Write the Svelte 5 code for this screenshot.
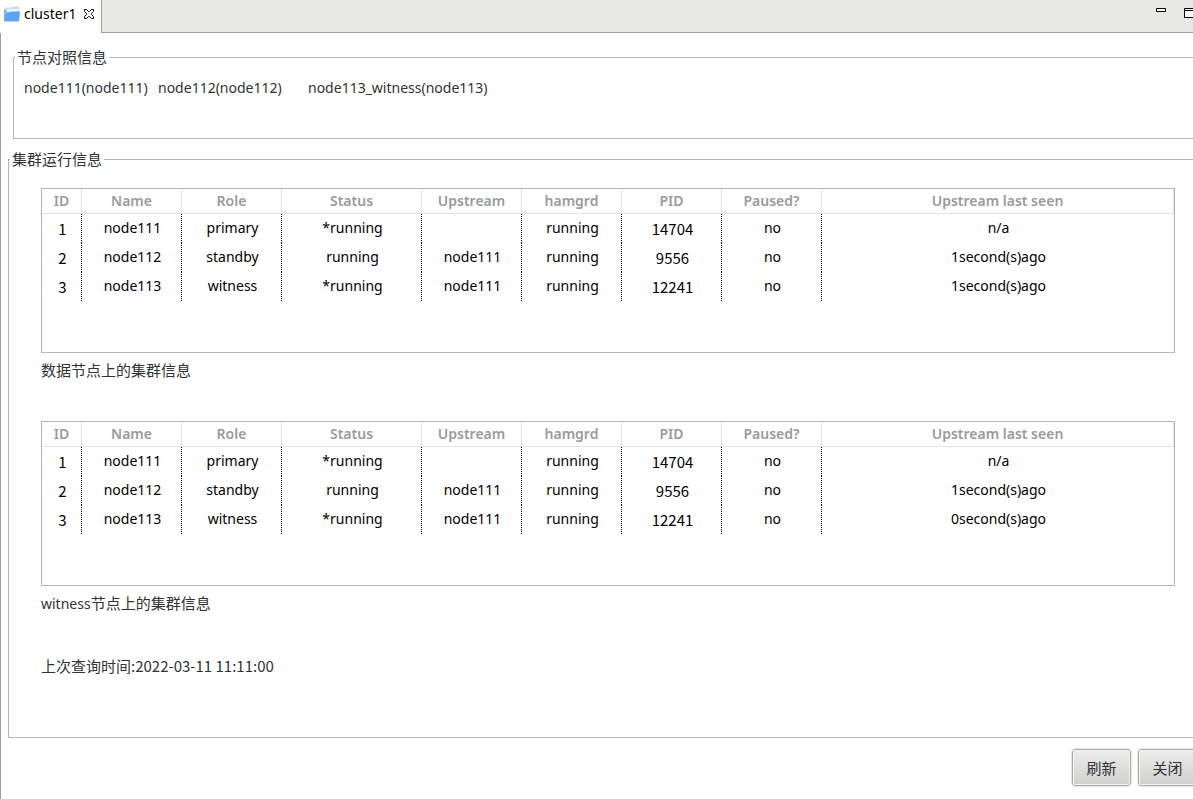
<script>
  const nodes = ['node111(node111)', 'node112(node112)', 'node113_witness(node113)'];
  const columns = ['ID', 'Name', 'Role', 'Status', 'Upstream', 'hamgrd', 'PID', 'Paused?', 'Upstream last seen'];

  const dataRows = [
    ['1', 'node111', 'primary', '*running', '', 'running', '14704', 'no', 'n/a'],
    ['2', 'node112', 'standby', 'running', 'node111', 'running', '9556', 'no', '1second(s)ago'],
    ['3', 'node113', 'witness', '*running', 'node111', 'running', '12241', 'no', '1second(s)ago']
  ];
  const witnessRows = [
    ['1', 'node111', 'primary', '*running', '', 'running', '14704', 'no', 'n/a'],
    ['2', 'node112', 'standby', 'running', 'node111', 'running', '9556', 'no', '1second(s)ago'],
    ['3', 'node113', 'witness', '*running', 'node111', 'running', '12241', 'no', '0second(s)ago']
  ];
  const sections = [
    { host: '', note: '数据节点上的集群信息', rows: dataRows },
    { host: 'witness', note: '节点上的集群信息', rows: witnessRows }
  ];
</script>

<div class="view">
  <header class="tabbar">
    <div class="tab">
      <svg class="folder" width="16" height="16" viewBox="0 0 16 16" aria-hidden="true">
        <path d="M1 1.5h6l1-1h7V14H1z" fill="#c5dcf9" />
        <path d="M3.5 3h11v4h-11z" fill="#eef5fe" />
        <path d="M0 3.5h2V15H0z" fill="#7db0f5" />
        <path d="M3.6 6.500L8 5.500H16L15 15.500H0.600L2 6.500z" fill="#5da2fb" />
      </svg>
      <span>cluster1</span>
      <button class="icon close" aria-label="close">
        <svg width="10" height="10" viewBox="0 0 10 10">
          <path d="M.5.5h2l2 2h1l2-2h2v2l-2 2v1l2 2v2h-2l-2-2h-1l-2 2h-2v-2l2-2v-1l-2-2z" fill="#fff" stroke="#000" />
        </svg>
      </button>
    </div>
    <div class="window-tools">
      <button class="icon" aria-label="minimize">
        <svg width="10" height="10" viewBox="0 0 10 10"><path d="M.5.5h9v3h-9z" fill="#fff" stroke="#000" /></svg>
      </button>
      <button class="icon" aria-label="maximize">
        <svg width="10" height="10" viewBox="0 0 10 10"><path d="M.5.5h9v9h-9zM0 2.500h10" fill="#fff" stroke="#000" /></svg>
      </button>
    </div>
  </header>

  <main>
    <fieldset class="nodes">
      <legend>节点对照信息</legend>
      <div class="node-list">
        {#each nodes as node}<span>{node}</span>{/each}
      </div>
    </fieldset>

    <fieldset class="cluster">
      <legend>集群运行信息</legend>
      <div class="cluster-body">
        {#each sections as section}
          <div class="grid-box">
            <table aria-label={section.host + section.note}>
              <colgroup>
                <col class="narrow" /><col /><col /><col class="wide" /><col /><col /><col /><col /><col class="rest" />
              </colgroup>
              <thead>
                <tr>{#each columns as column}<th scope="col">{column}</th>{/each}</tr>
              </thead>
              <tbody>
                {#each section.rows as row}
                  <tr>
                    {#each row as cell, i}<td class:number={i === 0 || i === 6}>{cell}</td>{/each}
                  </tr>
                {/each}
              </tbody>
            </table>
          </div>
          <p class="note"><span class="host">{section.host}</span>{section.note}</p>
        {/each}
        <p class="time">上次查询时间:2022-03-11 11:11:00</p>
      </div>
    </fieldset>

    <footer>
      <button class="push">刷新</button>
      <button class="push">关闭</button>
    </footer>
  </main>
</div>

<style>
  :global(body) {
    margin: 0;
    background: #fff;
  }
  .view {
    display: flex;
    flex-direction: column;
    min-height: 100vh;
    overflow: hidden;
    font: 14px/20px "Noto Sans", "Noto Sans CJK SC", sans-serif;
    color: #2e3436;
  }
  .tabbar {
    display: flex;
    justify-content: space-between;
    height: 33px;
    background: linear-gradient(#a0a19c, #a0a19c) bottom / 100% 1px no-repeat #e8e8e6;
  }
  .tab {
    display: flex;
    align-items: center;
    box-sizing: border-box;
    height: 33px;
    padding: 0 7px 5px 4px;
    border-right: 1px solid #a0a19c;
    background: #fff;
    color: #000;
  }
  .folder {
    margin-right: 4px;
  }
  .icon {
    display: block;
    padding: 0;
    border: 0;
    background: none;
    line-height: 0;
  }
  .close {
    margin-left: 8px;
  }
  .window-tools {
    display: flex;
    gap: 18px;
    align-items: flex-start;
    padding-top: 8px;
    margin-right: -1px;
  }
  main {
    flex: 1;
    border-left: 1px solid #a0a19c;
    padding: 15px 0 12px 7px;
  }
  fieldset {
    box-sizing: border-box;
    min-width: 0;
    margin: 0;
    border: 1px solid #b4b6b4;
    border-right: 0;
    padding: 0 0 0 1px;
  }
  legend {
    padding: 0 2px;
    font-size: 15px;
    line-height: 18px;
  }
  .nodes {
    margin-left: 5px;
    min-height: 91px;
  }
  .node-list {
    display: grid;
    grid-template-columns: 134px 150px auto;
    padding: 12px 9px 0;
  }
  .cluster {
    margin-top: 11px;
    min-height: 588px;
  }
  .cluster-body {
    padding: 20px 18px 0 31px;
  }
  .grid-box {
    box-sizing: border-box;
    min-height: 165px;
    border: 1px solid #b4b6b4;
  }
  table {
    width: 100%;
    table-layout: fixed;
    border-collapse: separate;
    border-spacing: 0;
    color: #000;
  }
  col {
    width: 100px;
  }
  .narrow {
    width: 40px;
  }
  .wide {
    width: 140px;
  }
  .rest {
    width: auto;
  }
  th,
  td {
    padding: 0;
    text-align: center;
  }
  th {
    height: 24px;
    border-right: 1px solid #e3e3e2;
    border-bottom: 1px solid #e3e3e2;
    font-weight: 600;
    color: #999b9a;
  }
  td {
    height: 27px;
    padding: 0 0 2px 1px;
    background: repeating-linear-gradient(#000 0 1px, transparent 1px 2px) right / 1px 100% no-repeat;
  }
  td:last-child {
    background: none;
  }
  .number {
    height: 29px;
    padding-bottom: 0;
    font-family: "Noto Sans CJK SC", sans-serif;
    font-size: 15px;
  }
  .note,
  .time {
    margin: 0;
    font-family: "Noto Sans CJK SC", sans-serif;
    font-size: 15px;
  }
  .note {
    padding: 7px 0 41px;
  }
  .host {
    font-family: "Noto Sans", sans-serif;
    font-size: 14px;
    line-height: 16px;
  }
  .time {
    padding-top: 2px;
  }
  footer {
    display: flex;
    justify-content: flex-end;
    gap: 7px;
    margin: 11px -4px 0 0;
  }
  .push {
    width: 59px;
    height: 37px;
    padding: 0;
    border: 1px solid #a9aba8;
    border-radius: 3px;
    outline: 1px solid #e8e8e6;
    background: linear-gradient(#ececeb, #d0d0ce);
    box-shadow: inset 0 0 0 1px #f3f3f2;
    font: 15px/20px "Noto Sans CJK SC", sans-serif;
    color: #2e3436;
  }
</style>
